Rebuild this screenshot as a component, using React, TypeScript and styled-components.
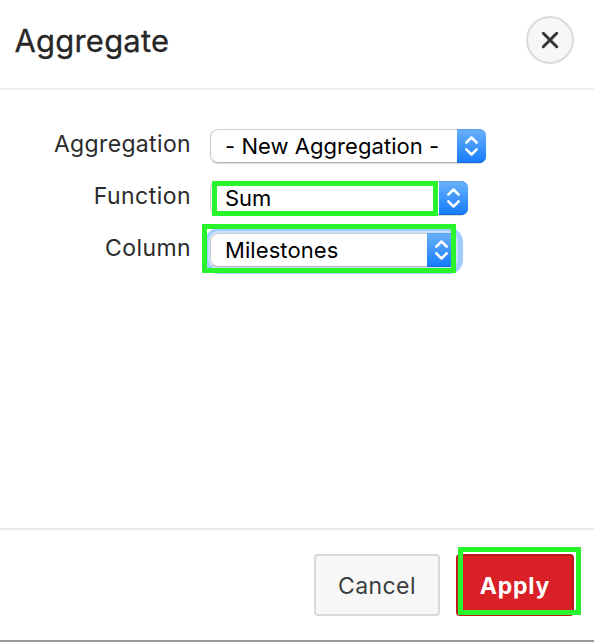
import React from "react";
import styled, { createGlobalStyle } from "styled-components";

const GlobalStyle = createGlobalStyle`
  * { box-sizing: border-box; }
  body { margin: 0; background: #fff; font-family: Inter, sans-serif; color: #2b2b2b; }
  button { font-family: inherit; padding: 0; }
`;

const Dialog = styled.section`
  width: 594px;
  height: 642px;
  display: flex;
  flex-direction: column;
  background: #fff;
  border-bottom: 2px solid #999;
  overflow: hidden;
`;

const Header = styled.header`
  height: 90px;
  flex: none;
  display: flex;
  justify-content: space-between;
  align-items: flex-start;
  padding: 16px 20px 0 14.5px;
  border-bottom: 2px solid #f1f1f1;
`;

const Title = styled.h1`
  margin: 0;
  font-size: 31px;
  line-height: 50px;
  font-weight: 400;
  letter-spacing: 0.2px;
  color: #272727;
  -webkit-text-stroke: 0.3px #272727;
`;

const CloseButton = styled.button`
  width: 48px;
  height: 48px;
  display: grid;
  place-items: center;
  border: 2px solid #dbdbdb;
  border-radius: 50%;
  background: #f7f7f7;
`;

const Form = styled.main`
  flex: 1;
  display: flex;
  flex-direction: column;
  gap: 18px;
  padding-top: 39px;
`;

const Row = styled.div`
  height: 34px;
  display: flex;
  gap: 19px;
`;

const Label = styled.label<{ $spacing: number }>`
  width: 191px;
  text-align: right;
  font-size: 23px;
  line-height: 30px;
  letter-spacing: ${(p) => p.$spacing}px;
  white-space: nowrap;
`;

const Select = styled.div<{ $width: number; $focused?: boolean }>`
  position: relative;
  width: ${(p) => p.$width}px;
  height: 34px;
  display: flex;
  justify-content: space-between;
  border-radius: 8px;
  background: #fff;
  box-shadow: ${(p) => (p.$focused ? "0 0 0 2px #c9e1fd, 1px 1px 0 6px #9fcbff" : "0 1px 1px #d8d8d8")};
`;

const Value = styled.span<{ $spacing: number }>`
  flex: 1;
  padding-left: 14px;
  border: 1px solid #cdcdcd;
  border-bottom-color: #b5b5b5;
  border-right: 0;
  border-radius: 8px 0 0 8px;
  font-size: 22px;
  line-height: 33px;
  letter-spacing: ${(p) => p.$spacing}px;
  color: #000;
  white-space: nowrap;
`;

const Stepper = styled.span`
  width: 29px;
  height: 34px;
  border-radius: 0 7px 7px 0;
  background: linear-gradient(#6bb2fa, #147bfe);
  box-shadow: inset 0 1px #5a9eea, inset 0 -1px #1268df;
  svg { display: block; }
`;

const Highlight = styled.i<{ $x: number; $y: number; $w: number; $h: number }>`
  position: absolute;
  left: ${(p) => p.$x}px;
  top: ${(p) => p.$y}px;
  width: ${(p) => p.$w}px;
  height: ${(p) => p.$h}px;
  border: 5px solid #29f52d;
  pointer-events: none;
`;

const Footer = styled.footer`
  height: 112px;
  flex: none;
  display: flex;
  justify-content: flex-end;
  align-items: flex-start;
  gap: 16px;
  padding: 24px 20px 0 0;
  border-top: 2px solid #e9e9e9;
`;

const Button = styled.button<{ $primary?: boolean }>`
  position: relative;
  width: ${(p) => (p.$primary ? 118 : 126)}px;
  height: 62px;
  padding-top: 2px;
  border: 2px solid ${(p) => (p.$primary ? "#bd1a20" : "#d9d9d9")};
  border-radius: 4px;
  background: ${(p) => (p.$primary ? "#d92027" : "#f7f7f7")};
  color: ${(p) => (p.$primary ? "#fff" : "#3b3d3f")};
  font-size: 23px;
  line-height: 56px;
  font-weight: ${(p) => (p.$primary ? 700 : 400)};
  letter-spacing: ${(p) => (p.$primary ? 0.8 : 0.4)}px;
`;

function Arrows() {
  return (
    <Stepper>
      <svg width="29" height="34" viewBox="0 0 29 34" fill="none" stroke="#fff" strokeWidth="2.5" strokeLinecap="round" strokeLinejoin="round">
        <path d="M9.3 13.6 14.5 8.5 19.7 13.6M9.3 20.4 14.5 25.5 19.7 20.4" />
      </svg>
    </Stepper>
  );
}

export default function App() {
  return (
    <>
      <GlobalStyle />
      <Dialog>
        <Header>
          <Title>Aggregate</Title>
          <CloseButton aria-label="Close">
            <svg width="20" height="20" viewBox="0 0 20 20" stroke="#333537" strokeWidth="3" strokeLinecap="round">
              <path d="M3.3 3.3 16.7 16.7M16.7 3.3 3.3 16.7" />
            </svg>
          </CloseButton>
        </Header>
        <Form>
          <Row>
            <Label $spacing={0.35}>Aggregation</Label>
            <Select $width={276}>
              <Value $spacing={0.05}>- New Aggregation -</Value>
              <Arrows />
            </Select>
          </Row>
          <Row>
            <Label $spacing={0.45}>Function</Label>
            <Select $width={258}>
              <Value $spacing={0}>Sum</Value>
              <Arrows />
              <Highlight $x={2} $y={0} $w={226} $h={35} />
            </Select>
          </Row>
          <Row>
            <Label $spacing={0.4}>Column</Label>
            <Select $width={246} $focused>
              <Value $spacing={0.08}>Milestones</Value>
              <Arrows />
              <Highlight $x={-8} $y={-9} $w={254} $h={49} />
            </Select>
          </Row>
        </Form>
        <Footer>
          <Button>Cancel</Button>
          <Button $primary>
            Apply
            <Highlight $x={0} $y={-9} $w={123} $h={68} />
          </Button>
        </Footer>
      </Dialog>
    </>
  );
}
